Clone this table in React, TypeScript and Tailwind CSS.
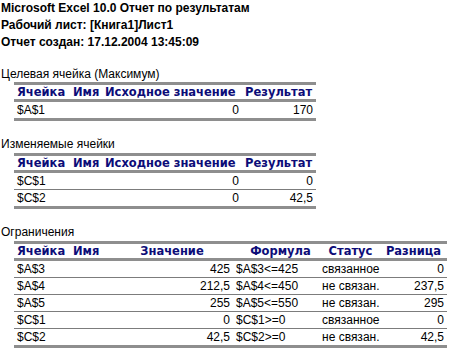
const font = { fontFamily: '"Liberation Sans", Arial, sans-serif' };
const headFont = { fontFamily: '"DejaVu Sans", Verdana, sans-serif' };

type Col = { title: string; width: number; head: string; cellAlign: 'left' | 'right' };

// one report block: thick rule, header, thick rule, rows with thin rules, thick rule
function ReportTable({ cols, rows }: { cols: Col[]; rows: string[][] }) {
  const template = cols.map((c) => `${c.width}px`).join(' ');
  return (
    <div className="ml-[14px] w-fit border-t-[3px] border-[#8e8e8e]">
      <div className="grid h-[17px] border-b-[3px] border-[#8e8e8e]" style={{ gridTemplateColumns: template }}>
        {cols.map((c, i) => (
          <div
            key={i}
            className={`text-[11.5px] font-bold text-[#0c0c78] whitespace-nowrap leading-[14px] ${c.head}`}
            style={headFont}
          >
            {c.title}
          </div>
        ))}
      </div>
      {rows.map((r, ri) => (
        <div
          key={ri}
          className={`grid items-center ${
            ri === rows.length - 1 ? 'h-[19px] border-b-[3px] border-[#8e8e8e]' : 'h-[17px] border-b border-[#7c7c7c]'
          }`}
          style={{ gridTemplateColumns: template }}
        >
          {r.map((v, ci) => (
            <div
              key={ci}
              className={`px-[3px] text-[12px] leading-[16px] whitespace-nowrap ${
                cols[ci].cellAlign === 'right' ? 'text-right' : 'text-left'
              }`}
            >
              {v}
            </div>
          ))}
        </div>
      ))}
    </div>
  );
}

export default function App() {
  const simpleCols: Col[] = [
    { title: 'Ячейка', width: 56, head: 'px-[3px] text-left', cellAlign: 'left' },
    { title: 'Имя', width: 32, head: 'px-[3px] text-left', cellAlign: 'left' },
    { title: 'Исходное значение', width: 140, head: 'px-[3px] text-left', cellAlign: 'right' },
    { title: 'Результат', width: 74, head: 'px-[3px] text-left', cellAlign: 'right' },
  ];

  const limitCols: Col[] = [
    { title: 'Ячейка', width: 56, head: 'px-[3px] text-left', cellAlign: 'left' },
    { title: 'Имя', width: 45, head: 'px-[3px] text-left', cellAlign: 'left' },
    { title: 'Значение', width: 118, head: 'pr-[4px] text-center', cellAlign: 'right' },
    { title: 'Формула', width: 86, head: 'pl-[9px] text-center', cellAlign: 'left' },
    { title: 'Статус', width: 62, head: 'pl-[1px] text-center', cellAlign: 'left' },
    { title: 'Разница', width: 66, head: 'pr-[1px] text-center', cellAlign: 'right' },
  ];

  return (
    <div className="w-[454px] h-[353px] bg-white overflow-hidden text-black" style={font}>
      <div className="pl-[1px] text-[12px] font-bold leading-[17px]">
        <div>Microsoft Excel 10.0 Отчет по результатам</div>
        <div>Рабочий лист: [Книга1]Лист1</div>
        <div>Отчет создан: 17.12.2004 13:45:09</div>
      </div>

      <div className="mt-[15px] pl-[1px] text-[12px] leading-[16px]">Целевая ячейка (Максимум)</div>
      <ReportTable cols={simpleCols} rows={[['$A$1', '', '0', '170']]} />

      <div className="mt-[14px] pl-[1px] text-[12px] leading-[18px]">Изменяемые ячейки</div>
      <ReportTable
        cols={simpleCols}
        rows={[
          ['$C$1', '', '0', '0'],
          ['$C$2', '', '0', '42,5'],
        ]}
      />

      <div className="mt-[14px] pl-[1px] text-[12px] leading-[18px]">Ограничения</div>
      <ReportTable
        cols={limitCols}
        rows={[
          ['$A$3', '', '425', '$A$3<=425', 'связанное', '0'],
          ['$A$4', '', '212,5', '$A$4<=450', 'не связан.', '237,5'],
          ['$A$5', '', '255', '$A$5<=550', 'не связан.', '295'],
          ['$C$1', '', '0', '$C$1>=0', 'связанное', '0'],
          ['$C$2', '', '42,5', '$C$2>=0', 'не связан.', '42,5'],
        ]}
      />
    </div>
  );
}
